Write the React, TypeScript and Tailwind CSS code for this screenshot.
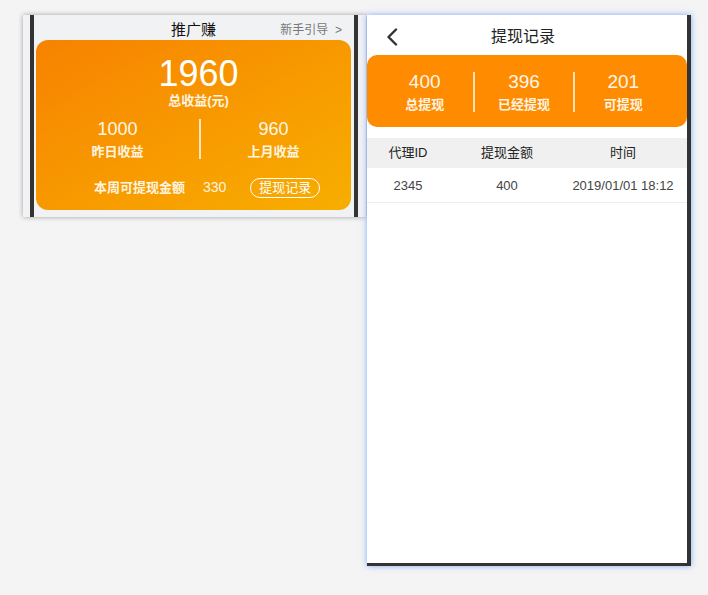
import React from "react";

const font = { fontFamily: '"Liberation Sans", "Noto Sans CJK SC", sans-serif' };

function EarnPanel() {
  return (
    <div className="w-[343px] h-[202px] bg-[#f1f2f4] shadow-[0_0_5px_rgba(0,0,0,0.35)] pl-[7px] pr-[8px]">
      <div className="h-full border-l-4 border-r-4 border-[#333] px-[2px] pr-[3px] flex flex-col">
        {/* header */}
        <div className="relative h-[25px] flex items-center justify-center">
          <span className="text-[15px] text-[#111] leading-none pt-[4px]">推广赚</span>
          <span className="absolute right-[9px] top-[9px] text-[12px] leading-none text-[#777]">
            新手引导&nbsp;&nbsp;&gt;
          </span>
        </div>

        {/* card */}
        <div className="h-[170px] rounded-[12px] bg-linear-to-br from-[#f78200] to-[#f7ae00] text-white flex flex-col items-center">
          <div className="mt-[16px] text-[36px] leading-[36px] pl-[10px]">1960</div>
          <div className="mt-[2px] text-[13px] leading-[14px] font-bold text-[#fff4e0] pl-[10px]">总收益(元)</div>

          <div className="mt-[11px] self-stretch flex items-stretch h-[40px]">
            <div className="w-[163px] flex flex-col items-center pt-[1px]">
              <span className="text-[18px] leading-[18px] text-[#fff6ea]">1000</span>
              <span className="mt-[7px] text-[13px] leading-[14px] font-bold text-[#fff4e0]">昨日收益</span>
            </div>
            <div className="w-[2px] bg-[#fde6c0]" />
            <div className="w-[145px] flex flex-col items-center pt-[1px]">
              <span className="text-[18px] leading-[18px] text-[#fff6ea]">960</span>
              <span className="mt-[7px] text-[13px] leading-[14px] font-bold text-[#fff4e0]">上月收益</span>
            </div>
          </div>

          <div className="mt-[18px] self-stretch flex items-center pl-[58px]">
            <span className="text-[13px] font-bold text-[#fff4e0]">本周可提现金额</span>
            <span className="ml-[18px] text-[14px] text-[#fff4e0]">330</span>
            <span className="ml-[24px] w-[70px] h-[20px] rounded-full border border-white flex items-center justify-center text-[13px] leading-none text-white">
              提现记录
            </span>
          </div>
        </div>
      </div>
    </div>
  );
}

function RecordPanel() {
  const stats = [
    { value: "400", label: "总提现" },
    { value: "396", label: "已经提现" },
    { value: "201", label: "可提现" },
  ];
  const rows = [{ id: "2345", amount: "400", time: "2019/01/01 18:12" }];

  return (
    <div className="w-[324px] h-[551px] bg-white border-r-4 border-b-[3px] border-[#333] shadow-[0_0_6px_rgba(80,140,255,0.7)] flex flex-col">
      {/* header */}
      <div className="relative h-[40px] flex items-center justify-center">
        <svg className="absolute left-[19px] top-[13px]" width="12" height="18" viewBox="0 0 12 18" fill="none">
          <path d="M10 1.5 L2.5 9 L10 16.5" stroke="#333" strokeWidth="2.4" strokeLinecap="round" strokeLinejoin="round" />
        </svg>
        <span className="text-[16px] text-[#222] pr-[8px] pt-[3px]">提现记录</span>
      </div>

      {/* stats */}
      <div className="h-[72px] rounded-[10px] bg-[#ff8b00] flex items-center pl-[9px] pr-[15px] pt-[1px] text-white">
        {stats.map((s, i) => (
          <React.Fragment key={s.label}>
            {i > 0 && <div className="w-[2px] h-[40px] bg-[#fde0b8]" />}
            <div className="flex-1 flex flex-col items-center pt-[2px]">
              <span className="text-[19px] leading-[18px] text-[#fff6ea]">{s.value}</span>
              <span className="mt-[7px] text-[13px] leading-[14px] font-bold text-[#fff4e0]">{s.label}</span>
            </div>
          </React.Fragment>
        ))}
      </div>

      {/* table */}
      <div className="mt-[11px] h-[30px] bg-[#f0f0f0] flex items-center text-[13px] text-[#222]">
        <div className="w-[82px] text-center">代理ID</div>
        <div className="w-[116px] text-center">提现金额</div>
        <div className="w-[116px] text-center">时间</div>
      </div>
      {rows.map((r) => (
        <div key={r.id} className="h-[35px] border-b border-[#eeeeee] flex items-center pt-[2px] text-[13px] text-[#444]">
          <div className="w-[82px] text-center">{r.id}</div>
          <div className="w-[116px] text-center">{r.amount}</div>
          <div className="w-[116px] text-center">{r.time}</div>
        </div>
      ))}
    </div>
  );
}

export default function App() {
  return (
    <div className="w-[708px] h-[595px] bg-[#f4f4f4] flex items-start pl-[23px] pt-[15px] gap-[1px]" style={font}>
      <EarnPanel />
      <RecordPanel />
    </div>
  );
}
